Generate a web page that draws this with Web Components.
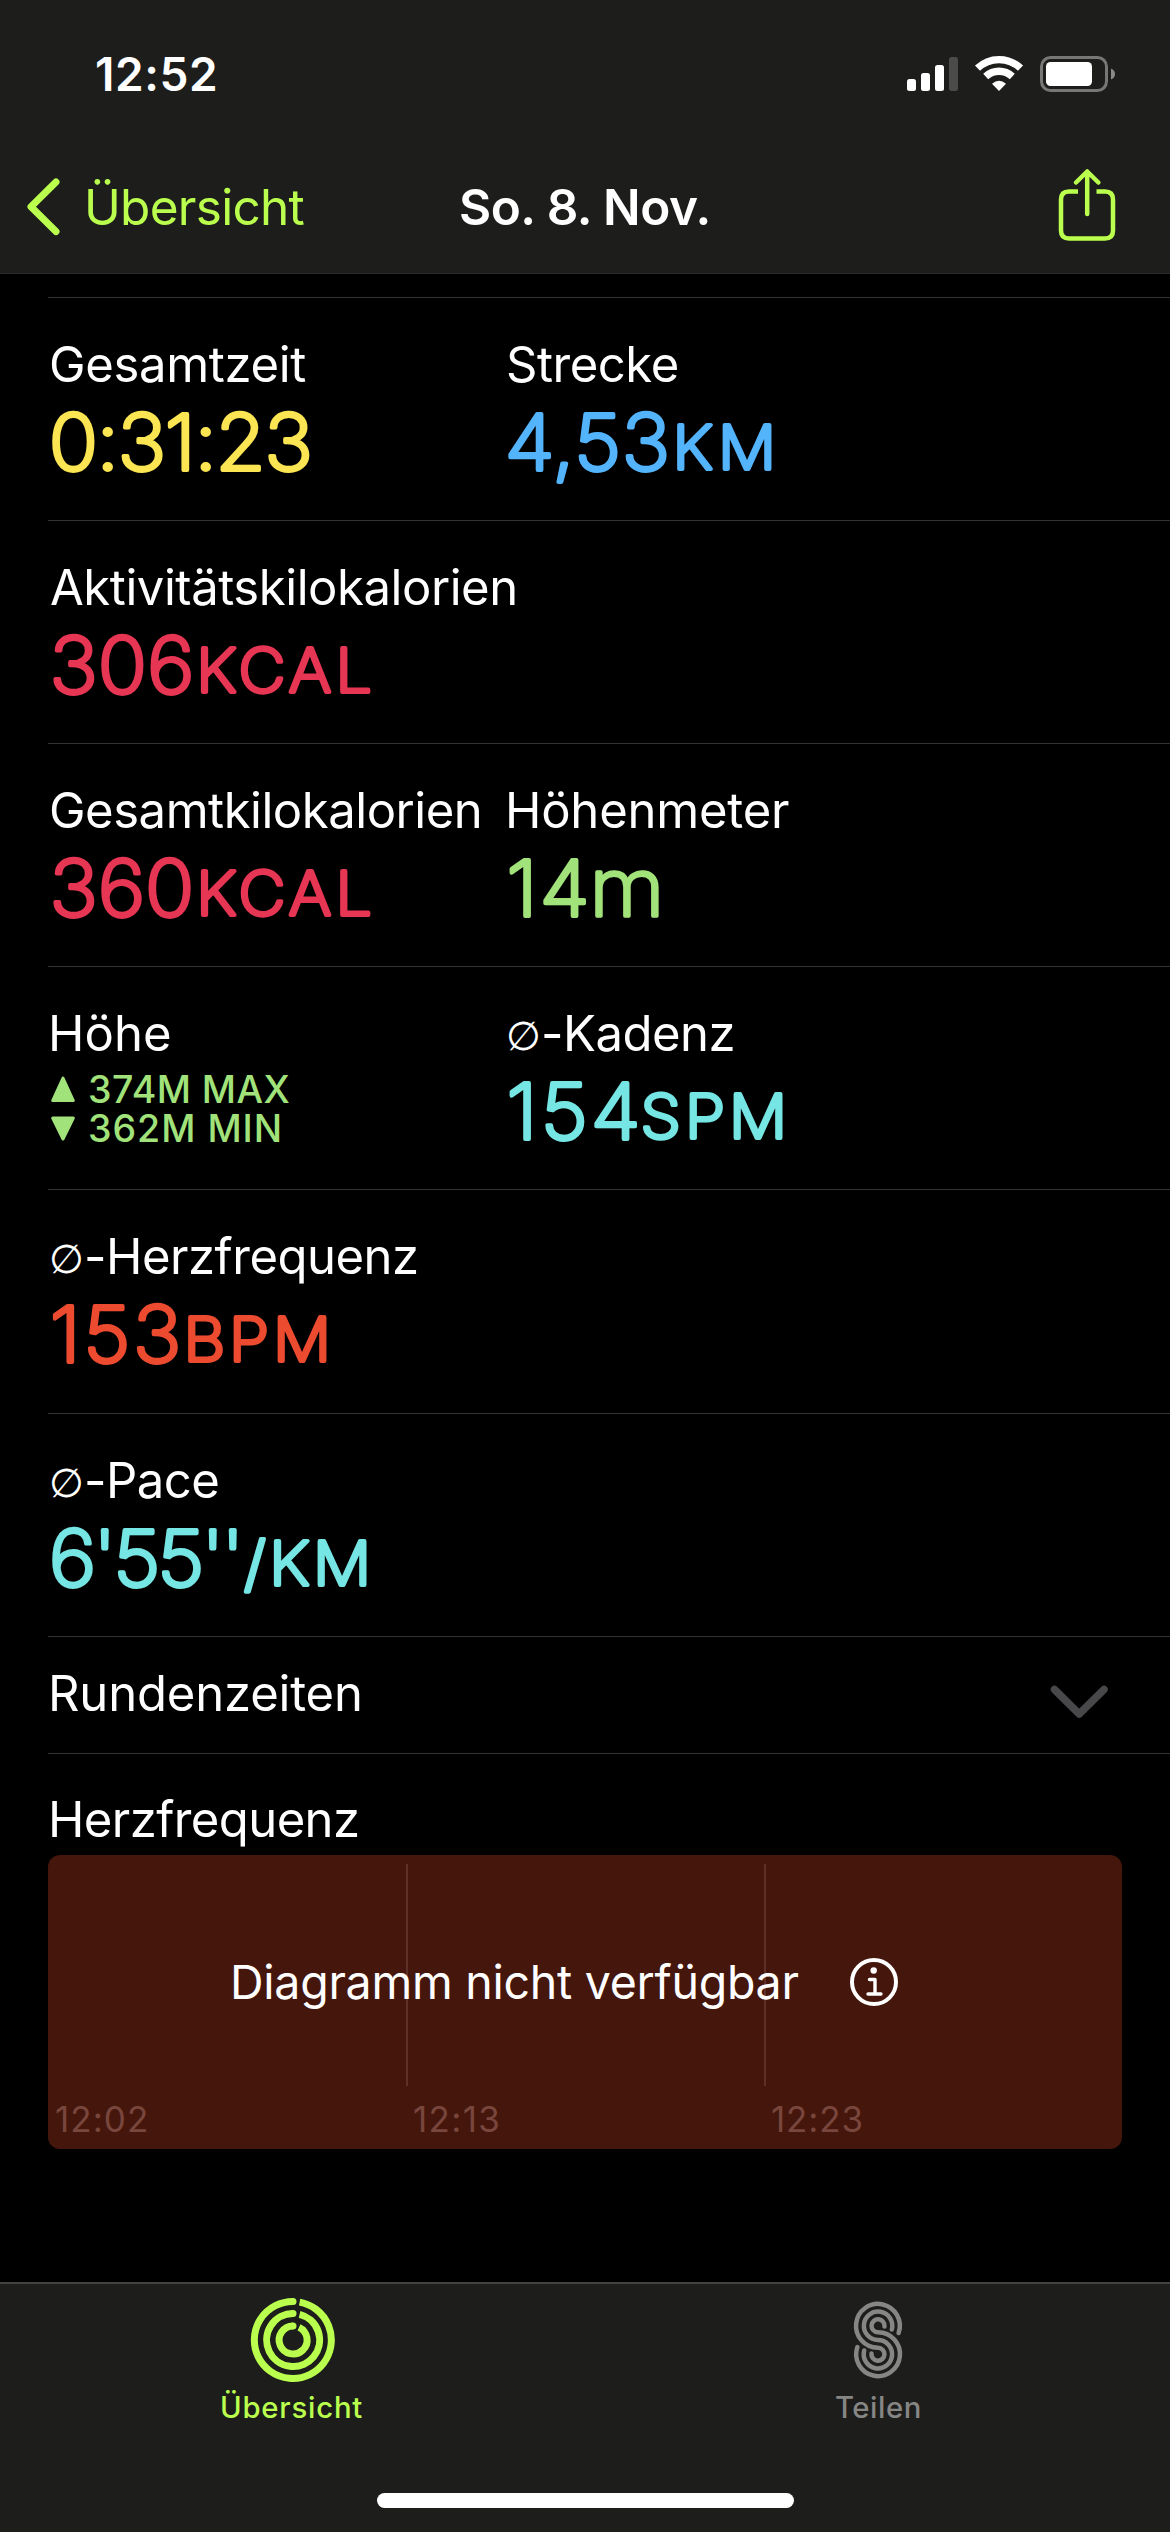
<!DOCTYPE html>
<html lang="de"><head><meta charset="utf-8"><title>Workout</title>
<style>body{margin:0;background:#000}</style></head>
<body>
<workout-screen></workout-screen>
<script>
const FONT = 'Inter, "Liberation Sans", sans-serif';
const LIME = '#baff4e';

/* Single line of text whose ink spans exactly [0, w] on a given baseline. */
class FitText extends HTMLElement {
  connectedCallback() {
    const a = (n, d) => this.getAttribute(n) ?? d;
    const size = +a('size', 49), weight = a('weight', 400), w = +a('w'), asc = +a('asc', 50), h = +a('h', 60);
    const text = a('text', ''), lead = a('lead', '');
    const root = this.attachShadow({mode: 'open'});
    const c = document.createElement('canvas').getContext('2d');
    c.font = `${weight} ${size}px ${FONT}`;
    const m = c.measureText(text);
    const off = lead ? 36 : 0;
    const ink = m.actualBoundingBoxLeft + m.actualBoundingBoxRight;
    const ls = (w - off - ink) / Math.max(1, text.length - 1);
    root.innerHTML = `<style>:host{display:block;width:${w}px;height:${h}px;flex:none}svg{display:block;overflow:visible}
      text{font-family:${FONT};font-size:${size}px;font-weight:${weight};fill:currentColor;white-space:pre}
      .lead{font-family:"DejaVu Sans",sans-serif;font-weight:200;font-size:39.5px}</style>
      <svg width="${w}" height="${h}">${lead ? `<text class="lead" x="-2" y="${asc - 1}">${lead}</text>` : ''}<text x="${m.actualBoundingBoxLeft + off}" y="${asc}" letter-spacing="${ls}">${text}</text></svg>`;
  }
}
customElements.define('fit-text', FitText);

/* Large rounded figure followed by a unit in small capitals. */
class MetricValue extends HTMLElement {
  connectedCallback() {
    const root = this.attachShadow({mode: 'open'});
    const c = document.createElement('canvas').getContext('2d');
    const part = (text, x0, x1, size, weight, sw, sx) => {
      c.font = `${weight} ${size}px ${FONT}`;
      const m = c.measureText(text), ink = m.actualBoundingBoxLeft + m.actualBoundingBoxRight;
      const ls = text.length > 1 ? ((x1 - x0) / sx - sw - ink) / (text.length - 1) : 0;
      return `<text transform="translate(${x0} 0) scale(${sx} 1)" x="${sw / 2 + m.actualBoundingBoxLeft}" y="${76.5 - sw / 2}" font-size="${size}" font-weight="${weight}" stroke-width="${sw}" letter-spacing="${ls}">${text}</text>`;
    };
    const n = this.getAttribute('n').split('|'), u = (this.getAttribute('u') || '').split('|');
    const small = u[0] !== 'm';
    root.innerHTML = `<style>:host{display:block;height:90px}svg{display:block;overflow:visible}
      text{font-family:${FONT};fill:currentColor;stroke:currentColor;stroke-linejoin:round;stroke-linecap:round;font-feature-settings:"calt" 0}</style>
      <svg width="400" height="90">${part(n[0], +n[1], +n[2], 77.5, 200, 3.8, 1.05)}${u[0] ? part(u[0], +u[1], +u[2], small ? 60.5 : 81, 200, small ? 4 : 3.4, 1.07) : ''}</svg>`;
  }
}
customElements.define('metric-value', MetricValue);

class MetricCell extends HTMLElement {
  connectedCallback() {
    this.attachShadow({mode: 'open'}).innerHTML = `<style>
      :host{display:flex;flex-direction:column;width:457px;flex:none;color:#fff}
      .label{height:63.500px;padding:33.500px 0 0 2.700px}.v{color:var(--c)}</style>
      <div class="label"><slot name="label"></slot></div><div class="v"><slot></slot></div>`;
  }
}
customElements.define('metric-cell', MetricCell);

class MetricRow extends HTMLElement {
  connectedCallback() {
    this.attachShadow({mode: 'open'}).innerHTML = `<style>
      :host{display:flex;box-sizing:border-box;height:var(--h,223px);margin-left:48px;border-top:1px solid #323234}</style><slot></slot>`;
  }
}
customElements.define('metric-row', MetricRow);

class ElevationRange extends HTMLElement {
  connectedCallback() {
    this.attachShadow({mode: 'open'}).innerHTML = `<style>
      :host{display:flex;flex-direction:column;padding:7.500px 0 0 3px}div{display:flex;height:39px;gap:15px}svg{flex:none;width:24px;height:39px}</style>
      <div><svg viewBox="0 0 24 39"><path d="M12 6 22.300 28.500H1.700Z" fill="currentColor" stroke="currentColor" stroke-width="3" stroke-linejoin="round"/></svg><fit-text text="374M MAX" w="199.500" size="37.500" weight="450" asc="30.500" h="39"></fit-text></div>
      <div><svg viewBox="0 0 24 39"><path d="M12 28 22.300 7H1.700Z" fill="currentColor" stroke="currentColor" stroke-width="3" stroke-linejoin="round"/></svg><fit-text text="362M MIN" w="189.800" size="37.500" weight="450" asc="30.500" h="39"></fit-text></div>`;
  }
}
customElements.define('elevation-range', ElevationRange);

class StatusBar extends HTMLElement {
  connectedCallback() {
    this.attachShadow({mode: 'open'}).innerHTML = `<style>
      :host{display:flex;height:141px;justify-content:space-between;padding:0 55px 0 96.500px;color:#fff}
      fit-text{padding-top:41px}svg{display:block;margin-top:50px}</style>
      <fit-text text="12:52" w="118" size="46" weight="600" asc="50"></fit-text>
      <svg width="208" height="48" viewBox="907 50 208 48">
        <g fill="#fff"><rect x="907" y="79" width="9" height="12" rx="2.500"/><rect x="921" y="73" width="9" height="18" rx="2.500"/><rect x="935" y="65" width="9" height="26" rx="2.500"/><rect x="949" y="57" width="9" height="34" rx="2.500" fill="#4b4b49"/>
        <path d="M999 91 992 83.700Q999 77.600 1006 83.700Z"/></g>
        <g fill="none" stroke="#fff" stroke-width="7.300"><path d="M977.500 68.200a31 31 0 0 1 43 0"/><path d="M985.700 76.500a19.500 19.500 0 0 1 26.600 0"/></g>
        <rect x="1041.500" y="57.500" width="65" height="33" rx="9" fill="none" stroke="#777775" stroke-width="3"/><rect x="1046" y="62" width="46" height="24" rx="4.500" fill="#fff"/><path d="M1111 68.500q4 1.500 4 5.500t-4 5.500Z" fill="#8a8a88"/>
      </svg>`;
  }
}
customElements.define('status-bar', StatusBar);

class NavBar extends HTMLElement {
  connectedCallback() {
    this.attachShadow({mode: 'open'}).innerHTML = `<style>
      :host{display:flex;height:132px;color:${LIME};border-bottom:1px solid #2b2b2a}
      .back{display:flex;width:461px}svg{display:block;flex:none}
      fit-text{padding-top:34px}.title{color:#fff}.share{margin-left:345px}</style>
      <div class="back"><svg width="87.700" height="132" viewBox="0 141 87.700 132"><path d="M56 182 31 206.800 56 231.500" fill="none" stroke="currentColor" stroke-width="7" stroke-linecap="round" stroke-linejoin="round"/></svg><fit-text text="Übersicht" w="216.500" size="49.500"></fit-text></div>
      <fit-text class="title" text="So. 8. Nov." w="248.500" size="49.500" weight="600"></fit-text>
      <svg class="share" width="64" height="132" viewBox="1055 141 64 132" fill="none" stroke="currentColor" stroke-width="4.500" stroke-linecap="round" stroke-linejoin="round"><path d="M1078 191.600H1069Q1061 191.600 1061 199.600V230.500Q1061 238.500 1069 238.500H1105Q1113 238.500 1113 230.500V199.600Q1113 191.600 1105 191.600H1096.500" stroke-linecap="butt"/><path d="M1087.200 214V172M1076 182.500 1087.200 171.500 1098.400 182.500"/></svg>`;
  }
}
customElements.define('nav-bar', NavBar);

class LapHeader extends HTMLElement {
  connectedCallback() {
    this.attachShadow({mode: 'open'}).innerHTML = `<style>
      :host{display:flex;flex:1;justify-content:space-between;padding:24px 62px 0 3.700px;color:#fff}svg{margin-top:22px}</style>
      <slot></slot><svg width="58" height="36" viewBox="0 0 58 36"><path d="M4.500 6.500 29.200 31 54 6.500" fill="none" stroke="#48484a" stroke-width="7.500" stroke-linecap="round" stroke-linejoin="round"/></svg>`;
  }
}
customElements.define('lap-header', LapHeader);

class HeartChart extends HTMLElement {
  connectedCallback() {
    this.attachShadow({mode: 'open'}).innerHTML = `<style>
      :host{display:grid;width:1074px;height:294px;margin-left:48px;border-radius:12px;background:#45160c;color:#fff}
      .cols,.msg{grid-area:1/1}.cols{display:flex}
      .col{flex:1;display:flex;flex-direction:column;color:#78463c}
      .line{width:2px;height:222px;margin-top:9px;background:#5d3028}.col:first-child .line{background:none}
      fit-text{margin:6px 0 0 8.300px}
      .msg{display:flex;padding-left:185.800px}.msg fit-text{margin:94px 52px 0 0}svg{margin-top:102px}</style>
      <div class="cols"><div class="col"><div class="line"></div><fit-text text="12:02" w="90" size="35" asc="40" h="50"></fit-text></div>
      <div class="col"><div class="line"></div><fit-text text="12:13" w="84.200" size="35" asc="40" h="50"></fit-text></div>
      <div class="col"><div class="line"></div><fit-text text="12:23" w="89.500" size="35" asc="40" h="50"></fit-text></div></div>
      <div class="msg"><fit-text text="Diagramm nicht verfügbar" w="564.400" size="46.500"></fit-text>
      <svg width="48" height="50" viewBox="0 0 48 50" fill="none" stroke="#fff" stroke-width="4"><circle cx="24" cy="25" r="22"/><path d="M19.500 22.500H25V37M18 37H31" stroke-width="3.400" stroke-linecap="round" stroke-linejoin="round"/><circle cx="23.700" cy="13.500" r="3.200" fill="#fff" stroke="none"/></svg></div>`;
  }
}
customElements.define('heart-chart', HeartChart);

class TabBar extends HTMLElement {
  connectedCallback() {
    this.attachShadow({mode: 'open'}).innerHTML = `<style>
      :host{display:flex;flex-direction:column;height:248px;border-top:2px solid #434342;background:#1d1d1b}
      .tabs{display:flex;height:209px}.tab{flex:1;display:flex;flex-direction:column;align-items:center}
      .on{color:${LIME}}.off{color:#868684}svg{display:block;margin-top:11px}
      .home{width:417px;height:15px;border-radius:8px;background:#fff;margin:0 auto}</style>
      <div class="tabs"><div class="tab on"><svg width="90" height="90" viewBox="247 2295 90 90" fill="none" stroke="currentColor" stroke-width="7">
        <path d="M298.600 2302.100A38.500 38.500 0 1 1 292 2301.500"/><path d="M298.600 2314.300A26.500 26.500 0 1 1 292 2313.500"/><path d="M298 2327.300A14 14 0 1 1 292 2326"/>
        <g fill="currentColor" stroke="none"><circle cx="292" cy="2301.500" r="3.500"/><circle cx="292" cy="2313.500" r="3.500"/><circle cx="292" cy="2326" r="3.500"/></g></svg>
        <fit-text text="Übersicht" w="140.300" size="29.300" weight="500" asc="33" h="40"></fit-text></div>
      <div class="tab off"><svg width="90" height="90" viewBox="832 2295 90 90" fill="none" stroke="currentColor" stroke-width="4.500" stroke-linecap="round">
        <path d="M897.600 2333A21.900 21.900 0 1 0 877 2347.700A6.500 6.500 0 1 1 870.500 2353.500"/>
        <path d="M890.800 2329.500A14.200 14.200 0 1 0 877 2340A14.200 14.200 0 1 1 863.200 2350.500"/>
        <path d="M883.500 2326.500A6.500 6.500 0 1 0 877 2332.300A21.900 21.900 0 1 1 856.400 2347"/></svg>
        <fit-text text="Teilen" w="83.700" size="29.300" weight="500" asc="33" h="40"></fit-text></div></div>
      <div class="home"></div>`;
  }
}
customElements.define('tab-bar', TabBar);

class WorkoutScreen extends HTMLElement {
  connectedCallback() {
    this.attachShadow({mode: 'open'}).innerHTML = `<style>
      :host{display:flex;flex-direction:column;width:1170px;height:2532px;background:#000;color:#fff;overflow:hidden}
      header{background:#1d1d1b;height:274px;margin-bottom:23px;flex:none}
      main{flex:1;display:flex;flex-direction:column}main>*{flex:none}.h{margin-left:1px}</style>
      <header><status-bar></status-bar><nav-bar></nav-bar></header>
      <main>
      <metric-row><metric-cell style="--c:#fbe552"><fit-text slot="label" text="Gesamtzeit" w="255.200"></fit-text><metric-value n="0:31:23|4|261.600"></metric-value></metric-cell>
        <metric-cell style="--c:#53b3fb"><fit-text slot="label" text="Strecke" w="169.700"></fit-text><metric-value n="4,53|3|161.700" u="KM|171.700|266.500"></metric-value></metric-cell></metric-row>
      <metric-row><metric-cell style="--c:#e73554"><fit-text slot="label" text="Aktivitätskilokalorien" w="464.200"></fit-text><metric-value n="306|4.800|143" u="KCAL|152.600|322.800"></metric-value></metric-cell></metric-row>
      <metric-row><metric-cell style="--c:#e73554"><fit-text slot="label" text="Gesamtkilokalorien" w="428.800"></fit-text><metric-value n="360|4.800|143" u="KCAL|152.600|322.800"></metric-value></metric-cell>
        <metric-cell style="--c:#a1e37a"><fit-text class="h" slot="label" text="Höhenmeter" w="280"></fit-text><metric-value n="14|3.800|81.800" u="m|90|152.400"></metric-value></metric-cell></metric-row>
      <metric-row><metric-cell style="--c:#a1e37a"><fit-text class="h" slot="label" text="Höhe" w="118"></fit-text><elevation-range></elevation-range></metric-cell>
        <metric-cell style="--c:#76e6e4"><fit-text slot="label" lead="∅" text="-Kadenz" w="225.400"></fit-text><metric-value n="154|3.800|133" u="SPM|137.700|277.500"></metric-value></metric-cell></metric-row>
      <metric-row style="--h:224px"><metric-cell style="--c:#ec4b30"><fit-text slot="label" lead="∅" text="-Herzfrequenz" w="366"></fit-text><metric-value n="153|4|130" u="BPM|139.700|278.500"></metric-value></metric-cell></metric-row>
      <metric-row><metric-cell style="--c:#76e6e4"><fit-text slot="label" lead="∅" text="-Pace" w="167.300"></fit-text><metric-value n="6'55''|4|189" u="/KM|195|318.500"></metric-value></metric-cell></metric-row>
      <metric-row style="--h:117px"><lap-header><fit-text text="Rundenzeiten" w="308"></fit-text></lap-header></metric-row>
      <metric-row style="--h:102px"><fit-text style="padding:33px 0 0 3.700px" text="Herzfrequenz" w="306"></fit-text></metric-row>
      <heart-chart></heart-chart>
      </main>
      <tab-bar></tab-bar>`;
  }
}
customElements.define('workout-screen', WorkoutScreen);
</script>
</body></html>
